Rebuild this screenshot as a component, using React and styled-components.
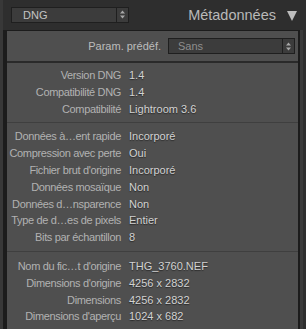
import React from "react";
import styled, { createGlobalStyle } from "styled-components";

const GlobalStyle = createGlobalStyle`
  html, body {
    margin: 0;
    padding: 0;
    background: #2c2c2c;
  }
  body {
    font-family: "Liberation Sans", Arial, sans-serif;
  }
`;

const sections = [
  [
    ["Version DNG", "1.4"],
    ["Compatibilité DNG", "1.4"],
    ["Compatibilité", "Lightroom 3.6"],
  ],
  [
    ["Données à…ent rapide", "Incorporé"],
    ["Compression avec perte", "Oui"],
    ["Fichier brut d'origine", "Incorporé"],
    ["Données mosaïque", "Non"],
    ["Données d…nsparence", "Non"],
    ["Type de d…es de pixels", "Entier"],
    ["Bits par échantillon", "8"],
  ],
  [
    ["Nom du fic…t d'origine", "THG_3760.NEF"],
    ["Dimensions d'origine", "4256 x 2832"],
    ["Dimensions", "4256 x 2832"],
    ["Dimensions d'aperçu", "1024 x 682"],
  ],
];

const Frame = styled.div`
  width: 306px;
  height: 329px;
  display: flex;
  flex-direction: column;
  overflow: hidden;
  background: #2e2e2e;
  border-left: 3px solid #383838;
  box-sizing: border-box;
`;

const Header = styled.div`
  height: 29px;
  display: flex;
  align-items: center;
  padding: 0 9px 1px 8px;
  flex-shrink: 0;
`;

const Select = styled.div`
  width: ${(p) => p.$width}px;
  height: 16px;
  display: flex;
  align-items: stretch;
  background: #3c3c3c;
  border: 1px solid #1f1f1f;
  box-sizing: border-box;
  color: ${(p) => (p.$dim ? "#8e8e8e" : "#c4c4c4")};
  font-size: 11px;
`;

const SelectText = styled.span`
  flex: 1;
  padding-left: ${(p) => p.$pad}px;
  line-height: 14px;
`;

const Stepper = styled.span`
  width: 11px;
  border-left: 1px solid #1f1f1f;
  display: flex;
  align-items: center;
  justify-content: center;
`;

const Title = styled.span`
  margin-left: auto;
  color: #b9b9b9;
  font-size: 14.5px;
`;

const Triangle = styled.span`
  margin-left: 11px;
  width: 0;
  height: 0;
  border-left: 5px solid transparent;
  border-right: 5px solid transparent;
  border-top: 10px solid #bdbdbd;
  margin-top: 2px;
`;

const Panel = styled.div`
  flex: 1;
  display: flex;
  flex-direction: column;
  border-left: 4px solid #1c1c1c;
  border-right: 2px solid #1c1c1c;
  border-top: 1px solid #1c1c1c;
  margin-right: 6px;
  background: #4f4f4f;
  box-shadow: 3px 0 0 #3a3a3a;
`;

const PresetRow = styled.div`
  height: 30px;
  display: flex;
  align-items: center;
  justify-content: flex-end;
  gap: 7px;
  padding-right: 3px;
  border-bottom: 2px solid #2a2a2a;
  color: #bcbcbc;
  font-size: 11px;
`;

const Group = styled.div`
  padding: ${(p) => p.$top}px 0 ${(p) => p.$bottom}px;
  border-top: ${(p) => (p.$line ? "1px solid #3f3f3f" : "none")};
`;

const Row = styled.div`
  display: grid;
  grid-template-columns: 114px 1fr;
  column-gap: 8px;
  height: 16.8px;
  line-height: 16.8px;
  font-size: 11px;
  white-space: nowrap;
`;

const Label = styled.span`
  text-align: right;
  color: #b2b2b2;
  letter-spacing: -0.35px;
`;

const Value = styled.span`
  color: #d2d2d2;
  text-shadow: 0 1px 1px #2a2a2a;
`;

const Arrows = () => (
  <svg width="7" height="9" viewBox="0 0 7 9">
    <path d="M3.5 0.5 L6 3.5 H1 Z M3.5 8.5 L6 5.5 H1 Z" fill="#a8a8a8" />
  </svg>
);

export default function App() {
  return (
    <>
      <GlobalStyle />
      <Frame>
        <Header>
          <Select $width={118}>
            <SelectText $pad={11}>DNG</SelectText>
            <Stepper>
              <Arrows />
            </Stepper>
          </Select>
          <Title>Métadonnées</Title>
          <Triangle />
        </Header>
        <Panel>
          <PresetRow>
            Param. prédéf.
            <Select $width={127} $dim>
              <SelectText $pad={9}>Sans</SelectText>
              <Stepper>
                <Arrows />
              </Stepper>
            </Select>
          </PresetRow>
          {sections.map((rows, i) => (
            <Group
              key={i}
              $line={i > 0}
              $top={i === 0 ? 4 : i === 1 ? 5 : 6}
              $bottom={i === 2 ? 0 : 5}
            >
              {rows.map(([label, value]) => (
                <Row key={label}>
                  <Label>{label}</Label>
                  <Value>{value}</Value>
                </Row>
              ))}
            </Group>
          ))}
        </Panel>
      </Frame>
    </>
  );
}
